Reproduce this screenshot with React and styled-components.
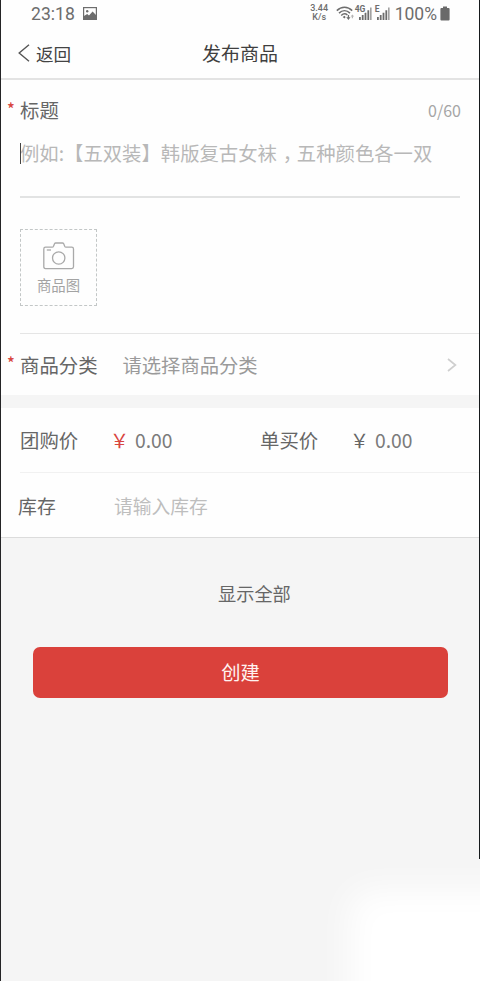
import React, { useState } from 'react';
import styled, { createGlobalStyle } from 'styled-components';

const GlobalStyle = createGlobalStyle`
  * {
    box-sizing: border-box;
  }
  body {
    margin: 0;
    background: #f5f5f5;
    font-family: "Noto Sans CJK SC", "Noto Sans", sans-serif;
  }
`

const PictureIcon = () => (
  <svg width="14" height="13" viewBox="0 0 14 13">
    <rect x=".6" y=".6" width="12.8" height="11.8" fill="none" stroke="#6d6d6d" strokeWidth="1.2" />
    <circle cx="4.2" cy="4.3" r="1.2" fill="#6d6d6d" />
    <path d="M1 9 4.2 7 6 8.4 9.6 4.6 13 8V12.4H1z" fill="#6d6d6d" />
  </svg>
)

const WifiIcon = () => (
  <svg width="19" height="15" viewBox="0 0 19 15">
    <g fill="none" stroke="#6d6d6d" strokeWidth="1.5">
      <path d="M.8 4.6C5.3.1 11.7.1 16.2 4.6" />
      <path d="M3 7.1C6.3 3.9 10.7 3.9 14 7.1" />
      <path d="M5.2 9.5C7.2 7.6 9.8 7.6 11.4 9" />
    </g>
    <path d="M6.7 11 8.5 9.8 9.6 11 8.5 12.4z" fill="#6d6d6d" />
    <path d="M11.8 9h1.3v2.2h1.4L12.4 14 10.3 11.2h1.5z" fill="#6d6d6d" />
    <path d="M16.4 8.4 18.2 10.4H17v1.8h-1.2v-1.8h-1.2z" fill="#b5b5b5" />
  </svg>
)

const BarsIcon = () => (
  <svg width="13" height="13" viewBox="0 0 13 13">
    <path d="M0 10h1.8v3H0zM2.8 8h1.8v5H2.8zM5.6 5.8h1.8V13H5.6zM8.4 3.3h1.8V13H8.4z" fill="#6d6d6d" />
    <path d="M11.2 .5h1.3V13H11.2z" fill="#8b8b8b" />
  </svg>
)

const BatteryIcon = () => (
  <svg width="10" height="15" viewBox="0 0 10 15">
    <path d="M3 .5h4v1.6h1.6q1 0 1 1v10.4q0 1-1 1H1.4q-1 0-1-1V3.1q0-1 1-1H3z" fill="#6a6a6a" />
  </svg>
)

const CameraIcon = () => (
  <svg width="32" height="28" viewBox="0 0 32 28">
    <g fill="none" stroke="#a9a9a9" strokeWidth="1.3">
      <path d="M2.6 5.2H9.2Q10.1 5.2 10.5 4.3L11.5 1.8Q11.9 1 12.7 1H19.5Q20.3 1 20.7 1.8L21.7 4.3Q22.1 5.2 23 5.2H28.7Q30.5 5.2 30.5 7V24.8Q30.5 26.6 28.7 26.6H2.4Q.8 26.6 .8 24.8V7Q.8 5.2 2.6 5.2Z" />
      <circle cx="15.7" cy="16" r="6.2" />
      <path d="M3.8 8H8" />
    </g>
  </svg>
)

const BackIcon = () => (
  <svg width="12" height="18" viewBox="0 0 12 18">
    <path d="M11 .8 1.2 9 11 17.2" fill="none" stroke="#555" strokeWidth="1.4" />
  </svg>
)

const ArrowIcon = () => (
  <svg width="10" height="14" viewBox="0 0 10 14">
    <path d="M1 1 8.4 7 1 13" fill="none" stroke="#cfcfcf" strokeWidth="1.7" />
  </svg>
)

const Price = ({ label, red, value }) => (
  <PriceCell>
    <PriceLabel>{label}</PriceLabel>
    <Yen $red={red}>￥</Yen>
    <Amount>{value}</Amount>
  </PriceCell>
)

const App = () => {
  const [title] = useState('');

  return <Screen>
    <GlobalStyle />

    {/*status bar*/}
    <StatusBar>
      <Clock>23:18</Clock>
      <PictureIcon />
      <StatusRight>
        <Speed><span>3.44</span><span>K/s</span></Speed>
        <WifiIcon />
        <Signal><Network>4G</Network><BarsIcon /></Signal>
        <Signal $gap="5px"><Network $left="-2px">E</Network><BarsIcon /></Signal>
        <Percent>100%</Percent>
        <BatteryIcon />
      </StatusRight>
    </StatusBar>

    <Header>
      <Back><BackIcon />返回</Back>
      <PageTitle>发布商品</PageTitle>
    </Header>

    {/*title and picture*/}
    <TitleSection>
      <TitleRow>
        <Star>*</Star>
        <Label>标题</Label>
        <Counter>{title.length}/60</Counter>
      </TitleRow>
      <TitleInput>
        <Caret />
        例如:【五双装】韩版复古女袜<Comma>，</Comma>五种颜色各一双
      </TitleInput>
      <Upload>
        <CameraIcon />
        <span>商品图</span>
      </Upload>
    </TitleSection>

    <CategoryRow>
      <Star>*</Star>
      <Label>商品分类</Label>
      <CategoryText>请选择商品分类</CategoryText>
      <ArrowIcon />
    </CategoryRow>

    {/*prices and stock*/}
    <Group>
      <PriceRow>
        <Price label="团购价" value="0.00" red />
        <Price label="单买价" value="0.00" />
      </PriceRow>
      <StockRow>
        <StockLabel>库存</StockLabel>
        <StockText>请输入库存</StockText>
      </StockRow>
    </Group>

    <ShowAll>显示全部</ShowAll>
    <Submit>创建</Submit>

    <Glow />
    <RightEdge />
  </Screen>
}

const Screen = styled.div`
  position: relative;
  display: flex;
  flex-direction: column;
  width: 480px;
  height: 981px;
  overflow: hidden;
  border-left: 1px solid #242426;
  background: #f5f5f5;
  color: #666;
  white-space: nowrap;
`
const StatusBar = styled.div`
  display: flex;
  align-items: center;
  height: 28px;
  padding: 0 30px 2px 30px;
  background: #fefefe;
  font-family: Roboto, sans-serif;
  color: #6d6d6d;
`
const Clock = styled.span`
  width: 52px;
  padding-top: 2px;
  font-size: 17.6px;
`
const StatusRight = styled.div`
  display: flex;
  align-items: center;
  margin-left: auto;
`
const Speed = styled.div`
  display: flex;
  flex-direction: column;
  align-items: center;
  width: 19px;
  margin-right: 7px;
  font-size: 9px;
  font-weight: 500;
  line-height: 9px;
`
const Signal = styled.div`
  position: relative;
  display: flex;
  margin-left: ${props => props.$gap || '4px'};
  padding-top: 1px;
`
const Network = styled.span`
  position: absolute;
  left: ${props => props.$left || '-4px'};
  top: -1px;
  font-size: 8.5px;
  font-weight: 700;
  line-height: 8px;
  background: #fefefe;
`
const Percent = styled.span`
  margin: 0 3px 0 5px;
  padding-top: 2px;
  font-size: 17.5px;
`
const Header = styled.header`
  display: grid;
  grid-template-columns: 1fr auto 1fr;
  align-items: center;
  height: 52px;
  padding: 0 1px 0 0;
  background: #fefefe;
  border-bottom: 2px solid #e3e3e3;
`
const Back = styled.div`
  display: flex;
  align-items: center;
  gap: 6px;
  padding-left: 17px;
  font-size: 17.6px;
  color: #444;
`
const PageTitle = styled.h1`
  margin: 0;
  font-size: 19px;
  font-weight: 400;
  line-height: 26px;
  color: #3f3f3f;
`
const TitleSection = styled.section`
  height: 253px;
  padding-left: 19px;
  background: #fefefe;
`
const TitleRow = styled.div`
  position: relative;
  display: flex;
  align-items: center;
  justify-content: space-between;
  height: 60px;
  padding-right: 19px;
`
const Star = styled.span`
  position: absolute;
  left: 6px;
  top: 50%;
  margin-top: -13px;
  font-size: 16px;
  font-weight: 500;
  line-height: 22px;
  color: #d8453f;

  ${TitleRow} & {
    left: -13px;
  }
`
const Label = styled.span`
  padding-bottom: 1px;
  font-size: 19.4px;
`
const Counter = styled.span`
  font-size: 16px;
  color: #a5a5a5;
`
const TitleInput = styled.div`
  position: relative;
  width: 440px;
  height: 58px;
  border-bottom: 2px solid #e2e3e3;
  font-size: 19.35px;
  line-height: 27px;
  color: #b8b8b8;
`
const Caret = styled.i`
  position: absolute;
  left: 0;
  top: 3px;
  width: 1px;
  height: 21px;
  background: #444;
`
/* half width comma, set in the middle of its cell */
const Comma = styled.span`
  display: inline-block;
  width: 20px;
  padding-left: 6px;
  font-feature-settings: "halt";
`
const Upload = styled.div`
  display: flex;
  flex-direction: column;
  align-items: center;
  width: 77px;
  height: 77px;
  margin-top: 31px;
  padding-top: 12px;
  border: 1px dashed #c3c7c7;
  font-size: 14.4px;
  line-height: 30px;
  color: #a3a3a3;
`
const CategoryRow = styled.div`
  position: relative;
  display: flex;
  align-items: center;
  height: 62px;
  padding: 2px 23px 0 19px;
  background: #fefefe;

  &::before {
    content: '';
    position: absolute;
    left: 19px;
    right: 0;
    top: 0;
    height: 1px;
    background: #e5e5e5;
  }
`
const CategoryText = styled.span`
  flex: 1;
  margin-left: 25px;
  font-size: 19.3px;
  color: #9a9a9a;
`
const Group = styled.section`
  margin-top: 13px;
  background: #fefefe;
  border-bottom: 1px solid #dcdcdc;
`
const PriceRow = styled.div`
  display: grid;
  grid-template-columns: 240px 1fr;
  align-items: center;
  height: 65px;
  margin-left: 19px;
  border-bottom: 1px solid #f1f1f1;
`
const PriceCell = styled.div`
  display: flex;
  align-items: center;
`
const PriceLabel = styled.span`
  width: 90px;
  padding-bottom: 1px;
  font-size: 19.4px;
`
const Yen = styled.span`
  width: 25px;
  padding-bottom: 1px;
  font-size: 19px;
  color: ${props => props.$red ? '#d8453f' : '#666'};
`
const Amount = styled.span`
  font-size: 19.3px;
  color: #7b7b7b;
`
const StockRow = styled.div`
  display: flex;
  align-items: center;
  height: 64px;
  padding: 1px 0 0 17px;
`
const StockLabel = styled.span`
  width: 96px;
  font-size: 18.9px;
`
const StockText = styled.span`
  font-size: 18.8px;
  color: #bebebe;
`
const ShowAll = styled.div`
  margin: 41px 0 0 217px;
  font-size: 18.2px;
  line-height: 28px;
  color: #666;
`
const Submit = styled.button`
  width: 415px;
  height: 51px;
  margin: 40px 0 0 32px;
  padding: 0 0 2px;
  border: 0;
  border-radius: 7px;
  background: #da413b;
  font-family: inherit;
  font-size: 19.3px;
  color: #fff3f1;
`
/* light spot in the bottom right corner */
const Glow = styled.div`
  position: absolute;
  left: 348px;
  top: 890px;
  width: 220px;
  height: 180px;
  border-radius: 20px;
  background: #fff;
  filter: blur(17px);
`
const RightEdge = styled.div`
  position: absolute;
  right: 0;
  top: 0;
  width: 1px;
  height: 859px;
  background: #161a1c;
`

export default App
